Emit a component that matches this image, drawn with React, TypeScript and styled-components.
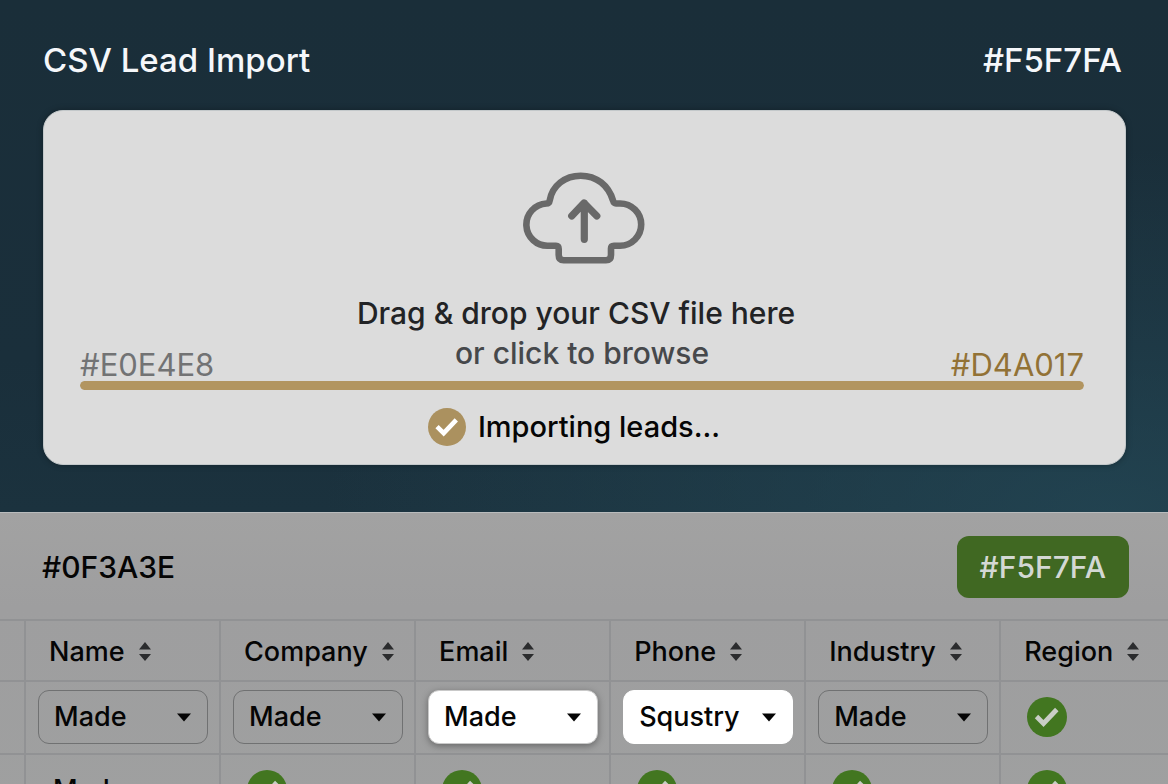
import React from "react";
import styled, { createGlobalStyle } from "styled-components";

const GlobalStyle = createGlobalStyle`
  *, *::before, *::after { box-sizing: border-box; }
  body {
    margin: 0;
    background: #9f9f9f;
    color: #050505;
    font-family: Inter, "Liberation Sans", sans-serif;
    font-weight: 500;
  }
  h1, h2, p { margin: 0; font: inherit; }
  button, select, input { font: inherit; color: inherit; }
`;

const Page = styled.div`
  height: 100vh;
  overflow: hidden;
`;

const Hero = styled.header`
  padding: 40px 42px 47px 43px;
  background:
    radial-gradient(ellipse at 95% 100%, rgba(36, 72, 86, 0.75), rgba(36, 72, 86, 0) 50%),
    linear-gradient(180deg, #1a2e39 0%, #1a2f3b 70%, #1b323e 100%);
`;

const TitleBar = styled.div`
  display: flex;
  justify-content: space-between;
  padding-right: 4px;
  margin-bottom: 30px;
  font-size: 33px;
  line-height: 40px;
  color: #f5f7fa;
`;

const DropCard = styled.section`
  padding: 60px 41px 18px 36px;
  border: 1px solid #c3c8ca;
  border-radius: 20px;
  background: #dcdcdc;
  box-shadow: 0 0 6px rgba(0, 0, 0, 0.3);
`;

const DropLabel = styled.label`
  display: block;
  cursor: pointer;
`;

const FileInput = styled.input`
  position: absolute;
  width: 1px;
  height: 1px;
  opacity: 0;
`;

const CloudIcon = styled.svg`
  display: block;
  margin: 0 auto 28px;
`;

const DropRow = styled.div`
  display: grid;
  grid-template-columns: 1fr auto 1fr;
  align-items: end;
`;

const DropText = styled.div`
  padding-bottom: 8px;
  font-size: 30px;
  line-height: 40px;
  text-align: center;
`;

const Prompt = styled.p`
  padding-right: 12px;
  color: #222325;
`;

const PromptHint = styled.p`
  color: #46484b;
`;

const Swatch = styled.span<{ $tone: string; $end?: boolean }>`
  font-size: 31px;
  line-height: 32px;
  font-weight: 400;
  color: ${(p) => p.$tone};
  text-align: ${(p) => (p.$end ? "right" : "left")};
`;

const Track = styled.div`
  height: 9px;
  border-radius: 5px;
  background: #d0d0cf;
  overflow: hidden;
`;

const Fill = styled.div`
  height: 100%;
  border-radius: 5px;
  background: #b29560;
`;

const Status = styled.div`
  display: flex;
  align-items: center;
  justify-content: center;
  gap: 12px;
  padding-right: 16px;
  margin-top: 18px;
  font-size: 29px;
  line-height: 38px;
`;

const Panel = styled.main`
  border-top: 1px solid #b9bcbd;
  background: linear-gradient(180deg, #a2a2a2 0%, #9e9e9f 30%, #9fa0a0 100%);
`;

const PanelBar = styled.div`
  display: flex;
  align-items: center;
  justify-content: space-between;
  padding: 23px 39px 21px 42px;
  font-size: 30px;
  line-height: 36px;
`;

const ActionButton = styled.button`
  padding: 13px 23px;
  border: 0;
  border-radius: 12px;
  background: #406822;
  color: #d3d8d4;
  font-size: 30px;
  line-height: 36px;
  cursor: pointer;
`;

const Table = styled.table`
  width: 100%;
  table-layout: fixed;
  border-collapse: separate;
  border-spacing: 0;
  font-size: 27px;
  line-height: 32px;
`;

const GutterCol = styled.col`
  width: 24px;
`;

const FieldCol = styled.col`
  width: 16.7%;
`;

const Gutter = styled.td`
  padding: 0;
  border-top: 2px solid #919294;
`;

const HeadCell = styled.th`
  height: 61px;
  padding: 2px 0 0 23px;
  border-top: 2px solid #919294;
  border-left: 2px solid #919294;
  font-weight: 500;
  text-align: left;
`;

const SortButton = styled.button`
  display: flex;
  align-items: center;
  gap: 14px;
  padding: 0;
  border: 0;
  background: none;
  cursor: pointer;
`;

const Cell = styled.td<{ $inset?: number }>`
  height: 73px;
  padding: 0 11px 1px ${(p) => p.$inset ?? 12}px;
  border-top: 2px solid #919294;
  border-left: 2px solid #919294;
  vertical-align: middle;
`;

const SelectWrap = styled.div`
  display: grid;
  align-items: center;
`;

const Select = styled.select<{ $look: "plain" | "raised" | "flat" }>`
  grid-area: 1 / 1;
  width: 100%;
  height: 54px;
  padding: 0 40px 0 15px;
  appearance: none;
  border: 1px solid ${(p) => (p.$look === "plain" ? "#707172" : p.$look === "raised" ? "#c9c9c9" : "#ffffff")};
  border-radius: 11px;
  background: ${(p) => (p.$look === "plain" ? "transparent" : "#ffffff")};
  box-shadow: ${(p) => (p.$look === "raised" ? "0 2px 7px rgba(0, 0, 0, 0.35)" : "none")};
`;

const Caret = styled.svg`
  grid-area: 1 / 1;
  justify-self: end;
  margin-right: 17px;
  pointer-events: none;
`;

const Badge = styled.svg`
  display: block;
  flex: none;
`;

function Check({ size, fill, mark }: { size: number; fill: string; mark: string }) {
  return (
    <Badge width={size} height={size} viewBox="0 0 40 40" aria-hidden="true">
      <circle cx="20" cy="20" r="20" fill={fill} />
      <path d="M9.5 19.5 L16.5 26.500 L29.800 12.500" fill="none" stroke={mark} strokeWidth="4.800" />
    </Badge>
  );
}

function SortIcon() {
  return (
    <svg width="12" height="20" viewBox="0 0 12 20" aria-hidden="true">
      <path d="M6 0 L12 7.500 H0 Z M0 12 H12 L6 19 Z" fill="#2b2c2e" />
    </svg>
  );
}

type Field = { name: string; value?: string; look?: "plain" | "raised" | "flat" };

const fields: Field[] = [
  { name: "Name", value: "Made", look: "plain" },
  { name: "Company", value: "Made", look: "plain" },
  { name: "Email", value: "Made", look: "raised" },
  { name: "Phone", value: "Squstry", look: "flat" },
  { name: "Industry", value: "Made", look: "plain" },
  { name: "Region" },
];

const green = <Check size={40} fill="#427620" mark="#c9cec6" />;

export default function App() {
  return (
    <Page>
      <GlobalStyle />
      <Hero>
        <TitleBar>
          <h1>CSV Lead Import</h1>
          <span>#F5F7FA</span>
        </TitleBar>
        <DropCard>
          <DropLabel>
            <FileInput type="file" accept=".csv" />
            <CloudIcon width="128" height="94" viewBox="0 0 128 94" fill="none" stroke="#696969" strokeWidth="6.6" strokeLinecap="round" strokeLinejoin="round" aria-hidden="true">
              <path d="M40.700 78 Q40.700 74.700 38 74.700 H30.500 A21.100 21.100 0 0 1 28.500 32.500 Q31.200 32.500 31.700 29.500 C34.200 14.500 47 4.700 62.700 4.700 C78.500 4.700 90.500 14.500 95 29.500 Q95.800 32.500 98 32.500 H102.100 A21.100 21.100 0 0 1 102.100 74.700 H96 Q93 74.700 93 77.500 V84 Q93 89.300 88 89.300 H45.700 Q40.700 89.300 40.700 84 Z" />
              <path d="M66.300 68.300 V32 M53.700 45 L66 32 L78.800 45" strokeWidth="7.2" />
            </CloudIcon>
            <DropRow>
              <Swatch $tone="#727374">#E0E4E8</Swatch>
              <DropText>
                <Prompt>Drag &amp; drop your CSV file here</Prompt>
                <PromptHint>or click to browse</PromptHint>
              </DropText>
              <Swatch $tone="#927236" $end>#D4A017</Swatch>
            </DropRow>
          </DropLabel>
          <Track role="progressbar" aria-label="Import progress" aria-valuenow={100}>
            <Fill />
          </Track>
          <Status>
            <Check size={38} fill="#ab915f" mark="#ffffff" />
            <span>Importing leads...</span>
          </Status>
        </DropCard>
      </Hero>
      <Panel>
        <PanelBar>
          <h2>#0F3A3E</h2>
          <ActionButton type="button">#F5F7FA</ActionButton>
        </PanelBar>
        <Table>
          <colgroup>
            <GutterCol />
            {fields.slice(0, 5).map((f) => (
              <FieldCol key={f.name} />
            ))}
            <col />
          </colgroup>
          <thead>
            <tr>
              <Gutter />
              {fields.map((f) => (
                <HeadCell key={f.name} scope="col">
                  <SortButton type="button">
                    {f.name}
                    <SortIcon />
                  </SortButton>
                </HeadCell>
              ))}
            </tr>
          </thead>
          <tbody>
            <tr>
              <Gutter />
              {fields.map((f) =>
                f.value ? (
                  <Cell key={f.name}>
                    <SelectWrap>
                      <Select aria-label={f.name} $look={f.look ?? "plain"} defaultValue={f.value}>
                        <option>{f.value}</option>
                      </Select>
                      <Caret width="14" height="9" viewBox="0 0 14 9" aria-hidden="true">
                        <path d="M0 0.500 H14 L7 8.500 Z" fill="#050505" />
                      </Caret>
                    </SelectWrap>
                  </Cell>
                ) : (
                  <Cell key={f.name} $inset={26}>{green}</Cell>
                )
              )}
            </tr>
            <tr>
              <Gutter />
              {fields.map((f, i) => (
                <Cell key={f.name} $inset={i === 0 ? 27 : 26}>
                  {i === 0 ? "Made" : green}
                </Cell>
              ))}
            </tr>
          </tbody>
        </Table>
      </Panel>
    </Page>
  );
}
